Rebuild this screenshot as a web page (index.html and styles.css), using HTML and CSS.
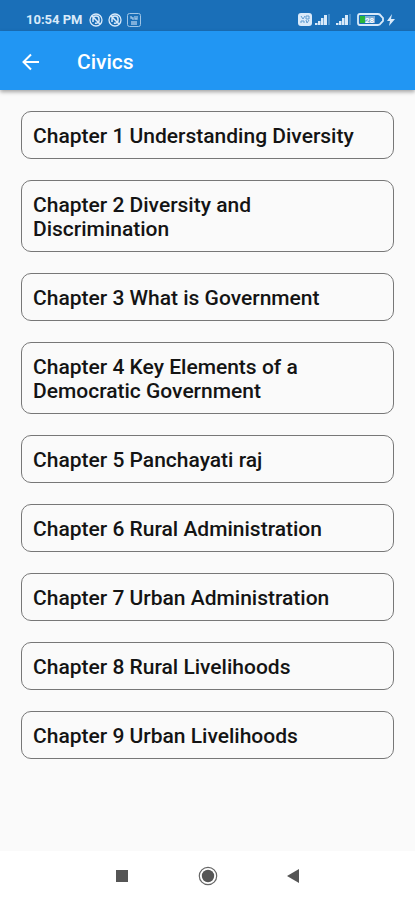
FILE: index.html
```
<!DOCTYPE html>
<html lang="en">
<head>
  <meta charset="UTF-8">
  <meta name="viewport" content="width=device-width, initial-scale=1.0">
  <title>Civics</title>
  <link rel="stylesheet" href="styles.css">
</head>
<body>
  <!-- status bar -->
  <div class="status-bar">
    <span class="time">10:54 PM</span>
    <svg class="app-icon" width="14" height="14" viewBox="0 0 14 14" fill="none" stroke="currentColor">
      <circle cx="7" cy="7" r="6" stroke-width="1.3"/>
      <path d="M4 9V6a3 3 0 0 1 6 0v2a3 3 0 0 1-4 2M3 3l8 8M6 6l3 3" stroke-width="1.5"/>
    </svg>
    <svg class="app-icon" width="14" height="14" viewBox="0 0 14 14" fill="none" stroke="currentColor">
      <circle cx="7" cy="7" r="6" stroke-width="1.3"/>
      <path d="M4 9V6a3 3 0 0 1 6 0v2a3 3 0 0 1-4 2M3 3l8 8M6 6l3 3" stroke-width="1.5"/>
    </svg>
    <svg class="note-icon" width="14" height="14" viewBox="0 0 14 14" fill="none" stroke="currentColor">
      <rect x="0.5" y="0.5" width="13" height="13" rx="2"/>
      <path d="M4 3v2h2v2M8 3v3h2V3M4 9h6M4 11h6" stroke-width="1.3"/>
    </svg>
    <div class="status-right">
      <svg width="14" height="13" viewBox="0 0 14 13">
        <rect width="14" height="13" rx="3" fill="currentColor"/>
        <path d="M3 3l2 3 2-3M8 3h3v3H8zM3 10V8h3v2M8 7l1 3 2-3" fill="none" stroke="#5f9bd0"/>
      </svg>
      <svg width="15" height="11" viewBox="0 0 15 11" fill="currentColor">
        <path d="M0 9h2.500v2H0zM3 7h2.500v4H3zM6 4h2.500v7H6zM9 1h3v10H9z"/>
        <path d="M13 0h2v11h-2z" opacity=".25"/>
      </svg>
      <svg class="sim-two" width="15" height="11" viewBox="0 0 15 11" fill="currentColor">
        <path d="M0 9h2.500v2H0zM3 7h2.500v4H3zM6 4h2.500v7H6zM9 1h3v10H9z"/>
        <path d="M13 0h2v11h-2z" opacity=".25"/>
      </svg>
      <svg class="battery" width="27" height="13" viewBox="0 0 27 13">
        <path d="M3 1h18q2 0 3 2l2 2v3l-2 2q-1 2-3 2H3q-2 0-2-2V3q0-2 2-2z" fill="#1a6fb8" stroke="currentColor" stroke-width="1.8"/>
        <rect x="3" y="3" width="5" height="7" fill="#27b63a"/>
        <rect x="8" y="3" width="10" height="7" fill="#7faed6"/>
        <text x="8" y="10" class="battery-level">28</text>
      </svg>
      <svg class="bolt" width="8" height="12" viewBox="0 0 8 12" fill="currentColor">
        <path d="M5 0L0 7h3l-1 5 6-7H4z"/>
      </svg>
    </div>
  </div>

  <!-- app bar -->
  <header class="app-bar">
    <button class="back" type="button" aria-label="Back">
      <svg width="18" height="18" viewBox="0 0 18 18" fill="none" stroke="currentColor" stroke-width="2">
        <path d="M18 9H2M10 1.500L2.500 9l7.500 7.500"/>
      </svg>
    </button>
    <h1>Civics</h1>
  </header>

  <!-- chapters -->
  <main class="chapters">
    <button class="chapter" type="button">Chapter 1 Understanding Diversity</button>
    <button class="chapter" type="button">Chapter 2 Diversity and Discrimination</button>
    <button class="chapter" type="button">Chapter 3 What is Government</button>
    <button class="chapter" type="button">Chapter 4 Key Elements of a Democratic Government</button>
    <button class="chapter" type="button">Chapter 5 Panchayati raj</button>
    <button class="chapter" type="button">Chapter 6 Rural Administration</button>
    <button class="chapter" type="button">Chapter 7 Urban Administration</button>
    <button class="chapter" type="button">Chapter 8 Rural Livelihoods</button>
    <button class="chapter" type="button">Chapter 9 Urban Livelihoods</button>
  </main>

  <!-- system navigation -->
  <nav class="nav-bar">
    <button type="button" aria-label="Recent apps">
      <svg width="20" height="20" viewBox="0 0 20 20"><rect x="4" y="4" width="12" height="12" fill="#555"/></svg>
    </button>
    <button type="button" aria-label="Home">
      <svg width="20" height="20" viewBox="0 0 20 20">
        <circle cx="10" cy="10" r="8.7" fill="none" stroke="#666" stroke-width="1.2"/>
        <circle cx="10" cy="10" r="6.2" fill="#555"/>
      </svg>
    </button>
    <button type="button" aria-label="Back">
      <svg width="20" height="20" viewBox="0 0 20 20"><path d="M3 10l12-7v14z" fill="#555"/></svg>
    </button>
  </nav>
</body>
</html>
```
FILE: styles.css
```
* {
  box-sizing: border-box;
}
body {
  margin: 0;
  min-height: 100vh;
  display: flex;
  flex-direction: column;
  background-color: #fafafa;
  font-family: Roboto, "Noto Sans", sans-serif;
  color: #141414;
}
button {
  margin: 0;
  padding: 0;
  border: none;
  background: none;
  color: inherit;
  font-family: inherit;
  cursor: pointer;
}
svg {
  display: block;
}

/* status bar */
.status-bar {
  display: flex;
  align-items: center;
  gap: 5px;
  height: 31px;
  padding: 8px 20px 0 26px;
  background-color: #1a6fb8;
  color: #d9eafa;
}
.time {
  font-size: 13px;
  font-weight: 700;
  margin-right: 1px;
}
.note-icon {
  opacity: 0.7;
}
.status-right {
  display: flex;
  align-items: center;
  gap: 3px;
  margin-left: auto;
}
.sim-two {
  margin-left: 3px;
}
.battery {
  margin-left: 3px;
}
.battery-level {
  font-size: 8px;
  font-weight: 700;
  fill: #fff;
}

/* app bar */
.app-bar {
  display: flex;
  align-items: center;
  height: 59px;
  padding: 2px 21px 0;
  background-color: #2196f3;
  color: #fff;
  box-shadow: 0 2px 4px rgba(0, 0, 0, 0.35);
}
.app-bar h1 {
  margin: 0 0 0 38px;
  font-size: 21px;
  font-weight: 500;
}

/* chapter list */
.chapters {
  flex: 1;
  display: flex;
  flex-direction: column;
  gap: 21px;
  padding: 21px;
}
.chapter {
  padding: 12px 11px 10px;
  border: 1px solid #777;
  border-radius: 10px;
  font-size: 21px;
  font-weight: 500;
  line-height: 24px;
  text-align: left;
}

/* system navigation */
.nav-bar {
  display: flex;
  justify-content: center;
  align-items: center;
  gap: 66px;
  height: 49px;
  background-color: #fff;
}
```
